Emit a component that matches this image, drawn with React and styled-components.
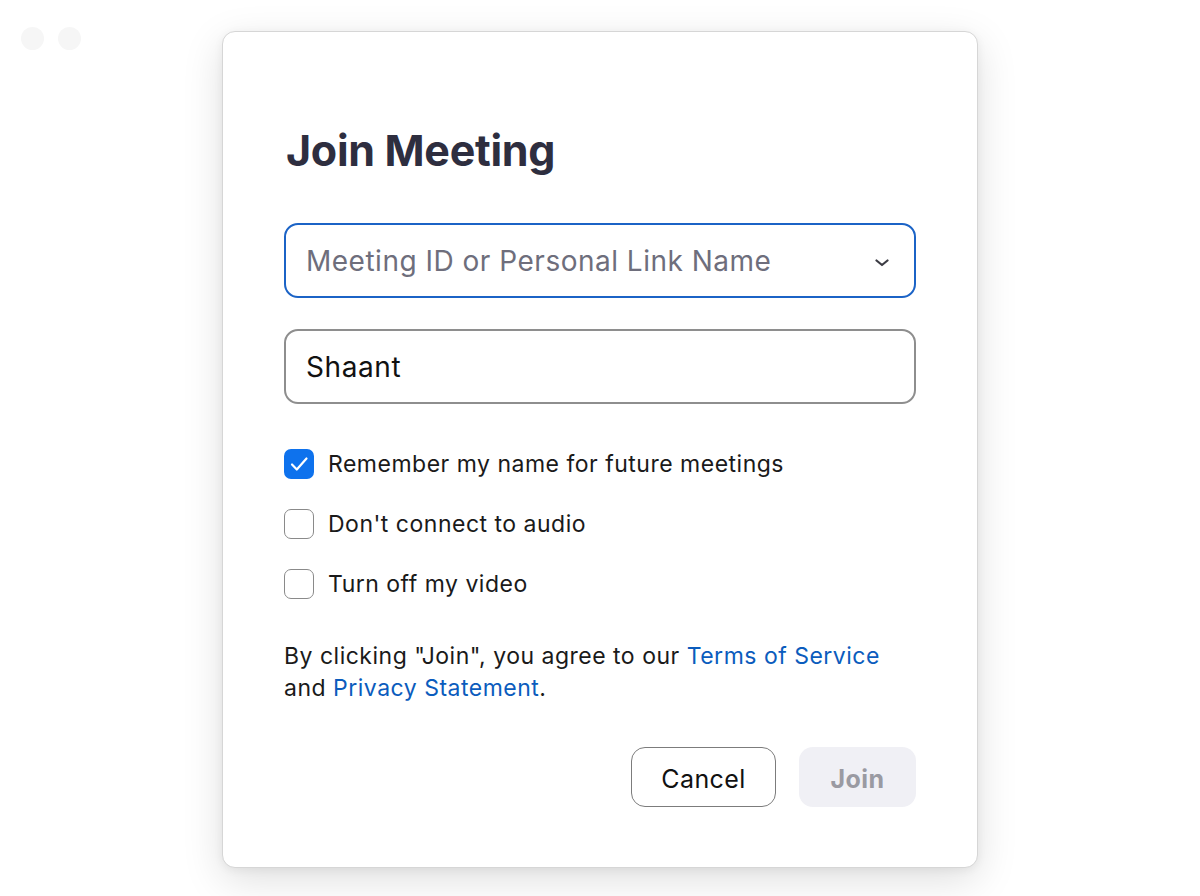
import styled, { createGlobalStyle } from "styled-components";

const GlobalStyle = createGlobalStyle`
  html, body {
    margin: 0;
    padding: 0;
    background: #ffffff;
    font-family: Inter, "Noto Sans", "Liberation Sans", sans-serif;
    -webkit-font-smoothing: antialiased;
  }
  * { box-sizing: border-box; }
`;

export default function App() {
  return (
    <Page>
      <GlobalStyle />
      <WindowDots>
        <Dot />
        <Dot />
      </WindowDots>
      <Dialog>
        <Title>Join Meeting</Title>

        <Field focused>
          <FieldText placeholder>Meeting ID or Personal Link Name</FieldText>
          <Chevron viewBox="0 0 14 8" width="14" height="8">
            <path d="M1.5 1.5 L7 6 L12.5 1.5" fill="none" stroke="#3c3c44" strokeWidth="2.2" strokeLinecap="round" strokeLinejoin="round" />
          </Chevron>
        </Field>

        <Field>
          <FieldText>Shaant</FieldText>
        </Field>

        <Options>
          <Option>
            <Box checked>
              <svg viewBox="0 0 30 30" width="30" height="30">
                <path d="M8 15.5 L12.8 20.5 L22.5 9.5" fill="none" stroke="#fff" strokeWidth="2.2" strokeLinecap="round" strokeLinejoin="round" />
              </svg>
            </Box>
            <Label>Remember my name for future meetings</Label>
          </Option>
          <Option>
            <Box />
            <Label>Don't connect to audio</Label>
          </Option>
          <Option>
            <Box />
            <Label>Turn off my video</Label>
          </Option>
        </Options>

        <Terms>
          By clicking "Join", you agree to our <Link>Terms of Service</Link>
          <br />
          and <Link>Privacy Statement</Link>.
        </Terms>

        <Actions>
          <Button>Cancel</Button>
          <Button primary disabled>Join</Button>
        </Actions>
      </Dialog>
    </Page>
  );
}

const Page = styled.div`
  position: relative;
  width: 1200px;
  height: 896px;
  background: #ffffff;
  display: flex;
  justify-content: center;
  padding-top: 31px;
  overflow: hidden;
`;

const WindowDots = styled.div`
  position: absolute;
  top: 27px;
  left: 21px;
  display: flex;
  gap: 14px;
`;

const Dot = styled.span`
  width: 23px;
  height: 23px;
  border-radius: 50%;
  background: #f6f6f6;
`;

const Dialog = styled.div`
  width: 756px;
  height: 837px;
  background: #ffffff;
  border: 1px solid #d6d6d6;
  border-radius: 13px;
  box-shadow: 0 12px 40px rgba(0, 0, 0, 0.13), 0 2px 10px rgba(0, 0, 0, 0.06);
  padding: 90px 61px 0 61px;
  display: flex;
  flex-direction: column;
`;

const Title = styled.h1`
  margin: 0 0 0 2px;
  font-size: 43px;
  line-height: 56px;
  font-weight: 700;
  color: #2e2e3f;
  letter-spacing: -0.3px;
`;

const Field = styled.div`
  height: 75px;
  margin-top: ${(p) => (p.focused ? "45px" : "31px")};
  border: 2px solid ${(p) => (p.focused ? "#1b63c6" : "#8e8e8e")};
  border-radius: 14px;
  display: flex;
  align-items: center;
  justify-content: space-between;
  padding: 0 25px 0 20px;
`;

const FieldText = styled.span`
  font-size: 28px;
  color: ${(p) => (p.placeholder ? "#6e6e7c" : "#111111")};
  letter-spacing: ${(p) => (p.placeholder ? "0.5px" : "0.6px")};
`;

const Chevron = styled.svg`
  display: block;
  margin-top: 4px;
`;

const Options = styled.div`
  margin-top: 30px;
  display: flex;
  flex-direction: column;
`;

const Option = styled.div`
  height: 60px;
  display: flex;
  align-items: center;
  gap: 14px;
`;

const Box = styled.span`
  width: 30px;
  height: 30px;
  border-radius: 7px;
  border: ${(p) => (p.checked ? "none" : "1.5px solid #8a8a8a")};
  background: ${(p) => (p.checked ? "#0e72ed" : "#ffffff")};
  display: flex;
  align-items: center;
  justify-content: center;
  flex-shrink: 0;
`;

const Label = styled.span`
  font-size: 23px;
  color: #1a1a1a;
  letter-spacing: 0.5px;
`;

const Terms = styled.p`
  margin: 26px 0 0 0;
  font-size: 23px;
  line-height: 32px;
  color: #1a1a1a;
  letter-spacing: 0.5px;
`;

const Link = styled.span`
  color: #0b5cbd;
`;

const Actions = styled.div`
  margin-top: 43px;
  display: flex;
  justify-content: flex-end;
  gap: 23px;
`;

const Button = styled.button`
  height: 60px;
  width: ${(p) => (p.primary ? "117px" : "145px")};
  padding: 3px 0 0 0;
  border-radius: 14px;
  font-family: inherit;
  font-size: 25px;
  letter-spacing: 0.4px;
  font-weight: ${(p) => (p.primary ? 700 : 400)};
  color: ${(p) => (p.primary ? "#9a9aa2" : "#111111")};
  background: ${(p) => (p.primary ? "#f0f0f5" : "#ffffff")};
  border: ${(p) => (p.primary ? "none" : "1.5px solid #7c7c7c")};
  cursor: pointer;
`;
